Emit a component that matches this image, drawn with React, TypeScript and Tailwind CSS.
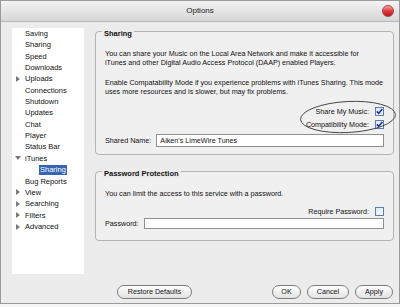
import React from "react";

const treeItems: { label: string; arrow?: "right" | "down"; indent?: boolean; selected?: boolean }[] = [
  { label: "Saving" },
  { label: "Sharing" },
  { label: "Speed" },
  { label: "Downloads" },
  { label: "Uploads", arrow: "right" },
  { label: "Connections" },
  { label: "Shutdown" },
  { label: "Updates" },
  { label: "Chat" },
  { label: "Player" },
  { label: "Status Bar" },
  { label: "iTunes", arrow: "down" },
  { label: "Sharing", indent: true, selected: true },
  { label: "Bug Reports" },
  { label: "View", arrow: "right" },
  { label: "Searching", arrow: "right" },
  { label: "Filters", arrow: "right" },
  { label: "Advanced", arrow: "right" },
];

function Check({ checked }: { checked: boolean }) {
  return (
    <div className="w-[9px] h-[9px] border border-[#5a7fb8] bg-gradient-to-br from-[#dfe8f5] to-[#f8fbff] flex items-center justify-center">
      {checked && (
        <svg width="7" height="7" viewBox="0 0 7 7">
          <path d="M0.8 3.4 L2.7 5.4 L6.3 0.9" fill="none" stroke="#1b2f9c" strokeWidth="1.6" />
        </svg>
      )}
    </div>
  );
}

function Btn({ label, w }: { label: string; w: string }) {
  return (
    <div
      className={`${w} h-[14px] rounded-full border border-[#7c7c7c] bg-gradient-to-b from-[#ffffff] to-[#e2e2e2] flex items-center justify-center text-[7.2px] text-[#111]`}
    >
      {label}
    </div>
  );
}

function Group({ title, h, children }: { title: string; h: string; children: React.ReactNode }) {
  return (
    <div className={`relative ${h} border border-[#b4b4b4] rounded-[4px] bg-[#f0f0f0]`}>
      <div className="absolute left-[6px] -top-[2px] px-[2px] bg-[#ececec] font-bold text-[7.5px] leading-[8px]">
        {title}
      </div>
      {children}
    </div>
  );
}

export default function App() {
  return (
    <div className="w-[400px] h-[307px] bg-[#f6f6f6] font-['Liberation_Sans',Arial,sans-serif] text-[7.2px] text-[#111]">
      <div className="w-[400px] h-[304px] bg-[#ececec] border border-[#9a9a9a] flex flex-col">
        <div className="relative h-[21px] bg-gradient-to-b from-[#f4f4f4] to-[#d6d6d6] border-b border-[#b9b9b9] flex items-center justify-center text-[8px] text-[#222]">
          Options
          <div className="absolute right-[5px] top-[4px] w-[12px] h-[12px] rounded-full bg-gradient-to-b from-[#f7a0a0] via-[#e0393b] to-[#b81416] border border-[#a2484a]" />
        </div>
        <div className="flex flex-1">
          <div className="ml-[11px] mt-[6px] w-[72px] h-[246px] bg-white flex flex-col text-[7.5px]">
            {treeItems.map((it, i) => (
              <div key={i} className="h-[11.35px] flex items-center relative">
                {it.arrow === "right" && (
                  <svg className="absolute left-[4px]" width="5" height="6" viewBox="0 0 5 6">
                    <path d="M0 0 L4 3 L0 6 Z" fill="#7a7a7a" />
                  </svg>
                )}
                {it.arrow === "down" && (
                  <svg className="absolute left-[3px]" width="6" height="5" viewBox="0 0 6 5">
                    <path d="M0 0 L6 0 L3 4 Z" fill="#7a7a7a" />
                  </svg>
                )}
                {it.selected ? (
                  <span className="ml-[27px] px-[1px] bg-[#3563b5] text-white leading-[10px]">{it.label}</span>
                ) : (
                  <span className="ml-[13px]">{it.label}</span>
                )}
              </div>
            ))}
          </div>
          <div className="ml-[11px] w-[299px] flex flex-col">
            <div className="mt-[9px]">
              <Group title="Sharing" h="h-[124px]">
                <div className="pl-[9px] pr-[9px] pt-[17px] leading-[9px] whitespace-nowrap">
                  <div>You can share your Music on the Local Area Network and make it accessible for</div>
                  <div>iTunes and other Digital Audio Access Protocol (DAAP) enabled Players.</div>
                  <div className="mt-[11px]">Enable Compatability Mode if you experience problems with iTunes Sharing. This mode</div>
                  <div>uses more resources and is slower, but may fix problems.</div>
                  <div className="mt-[9px] flex items-center justify-end gap-[6px] h-[13px]">
                    <span>Share My Music:</span>
                    <Check checked />
                  </div>
                  <div className="flex items-center justify-end gap-[6px] h-[13px]">
                    <span>Compatibility Mode:</span>
                    <Check checked />
                  </div>
                  <div className="mt-[3px] flex items-center gap-[5px]">
                    <span>Shared Name:</span>
                    <div className="flex-1 h-[13px] bg-white border border-[#8f8f8f] flex items-center pl-[3px]">
                      Aiken's LimeWire Tunes
                    </div>
                  </div>
                </div>
                <svg className="absolute left-[202px] top-[67px]" width="100" height="36" viewBox="0 0 100 36">
                  <ellipse cx="50" cy="18" rx="47.5" ry="15.5" fill="none" stroke="#3a3a3a" strokeWidth="0.9" transform="rotate(-3 50 18)" />
                </svg>
              </Group>
            </div>
            <div className="mt-[16px]">
              <Group title="Password Protection" h="h-[70px]">
                <div className="pl-[9px] pr-[9px] pt-[17px] leading-[9px] whitespace-nowrap">
                  <div>You can limit the access to this service with a password.</div>
                  <div className="mt-[8px] flex items-center justify-end gap-[6px] h-[11px]">
                    <span>Require Password:</span>
                    <Check checked={false} />
                  </div>
                  <div className="mt-[1px] flex items-center gap-[5px]">
                    <span>Password:</span>
                    <div className="flex-1 h-[11px] bg-white border border-[#8f8f8f]" />
                  </div>
                </div>
              </Group>
            </div>
            <div className="mt-[44px] flex items-center">
              <div className="ml-[22px]">
                <Btn label="Restore Defaults" w="w-[75px]" />
              </div>
              <div className="ml-auto mr-[1px] flex gap-[6px]">
                <Btn label="OK" w="w-[29px]" />
                <Btn label="Cancel" w="w-[42px]" />
                <Btn label="Apply" w="w-[38px]" />
              </div>
            </div>
          </div>
        </div>
      </div>
    </div>
  );
}
